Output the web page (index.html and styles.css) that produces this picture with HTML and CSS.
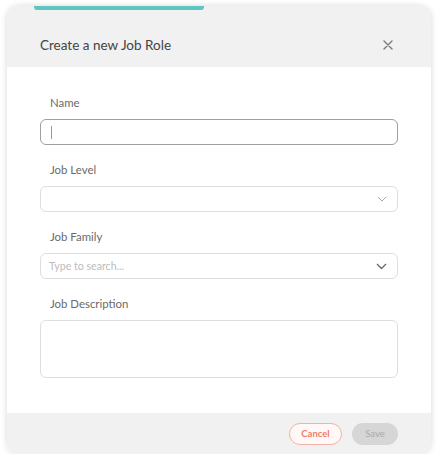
FILE: index.html
```html
<!DOCTYPE html>
<html>
<head>
<meta charset="utf-8">
<link rel="stylesheet" href="styles.css">
</head>
<body>
<div class="modal">
  <div class="header">
    <div class="accent"></div>
    <div class="header-row">
      <span class="title">Create a new Job Role</span>
      <svg class="close" width="10" height="10" viewBox="0 0 10 10"><path d="M1 1L9 9M9 1L1 9" stroke="#7a7a7a" stroke-width="1.4" stroke-linecap="round"/></svg>
    </div>
  </div>
  <div class="body">
    <div class="field">
      <label class="label">Name</label>
      <div class="input focused"><span class="caret"></span></div>
    </div>
    <div class="field">
      <label class="label">Job Level</label>
      <div class="input select">
        <svg width="10" height="6" viewBox="0 0 10 6"><path d="M1 1L5 5L9 1" fill="none" stroke="#a8a8a8" stroke-width="1"/></svg>
      </div>
    </div>
    <div class="field">
      <label class="label">Job Family</label>
      <div class="input select">
        <span class="placeholder">Type to search...</span>
        <svg width="11" height="7" viewBox="0 0 11 7"><path d="M1 1L5.5 5.5L10 1" fill="none" stroke="#666" stroke-width="1.3"/></svg>
      </div>
    </div>
    <div class="field">
      <label class="label">Job Description</label>
      <div class="input textarea"></div>
    </div>
  </div>
  <div class="footer">
    <button class="btn cancel">Cancel</button>
    <button class="btn save">Save</button>
  </div>
</div>
</body>
</html>
```
FILE: styles.css
```css
* { box-sizing: border-box; }
body {
  margin: 0;
  background: #ffffff;
  font-family: Lato, "Open Sans", sans-serif;
}
.modal {
  margin: 6px 0 0 7px;
  width: 424px;
  height: 448px;
  border-radius: 12px;
  overflow: hidden;
  box-shadow: 0 0 6px rgba(0,0,0,0.16);
  display: flex;
  flex-direction: column;
}
.header {
  background: #f1f1f1;
  height: 61px;
}
.accent {
  margin-left: 27px;
  width: 170px;
  height: 4px;
  background: #5ec5c2;
  border-radius: 0 0 3px 3px;
}
.header-row {
  display: flex;
  align-items: center;
  justify-content: space-between;
  padding: 0 38px 0 33px;
  height: 28px;
  margin-top: 21px;
}
.title {
  font-size: 13.5px;
  color: #444;
}
.body {
  background: #fff;
  flex: 1;
  padding: 28px 33px 0 33px;
  display: flex;
  flex-direction: column;
  gap: 17px;
}
.field {
  display: flex;
  flex-direction: column;
  gap: 8px;
}
.label {
  font-size: 11.4px;
  line-height: 16px;
  color: #6a6a6a;
  padding-left: 10px;
}
.input {
  height: 26px;
  border: 1px solid #dedede;
  border-radius: 6px;
  display: flex;
  align-items: center;
  padding: 0 10px 0 8px;
}
.input.focused {
  border-color: #a0a0a0;
}
.caret {
  width: 1px;
  height: 13px;
  background: #999;
  margin-left: 2px;
}
.select {
  justify-content: space-between;
}
.select svg { margin-left: auto; }
.placeholder {
  font-size: 10.6px;
  color: #bcbcbc;
}
.textarea {
  height: 58px;
}
.footer {
  background: #f1f1f1;
  height: 41px;
  display: flex;
  justify-content: flex-end;
  align-items: center;
  gap: 10px;
  padding: 0 33px 0 0;
}
.btn {
  height: 22px;
  border-radius: 11px;
  font-family: Lato, "Open Sans", sans-serif;
  font-size: 9.5px;
  padding: 0;
}
.cancel {
  width: 53px;
  background: #fff8f6;
  border: 1px solid #f2b2a5;
  color: #ee7f6a;
  font-weight: bold;
}
.save {
  width: 46px;
  background: #d6d6d6;
  border: none;
  color: #a9a9a9;
}
```
